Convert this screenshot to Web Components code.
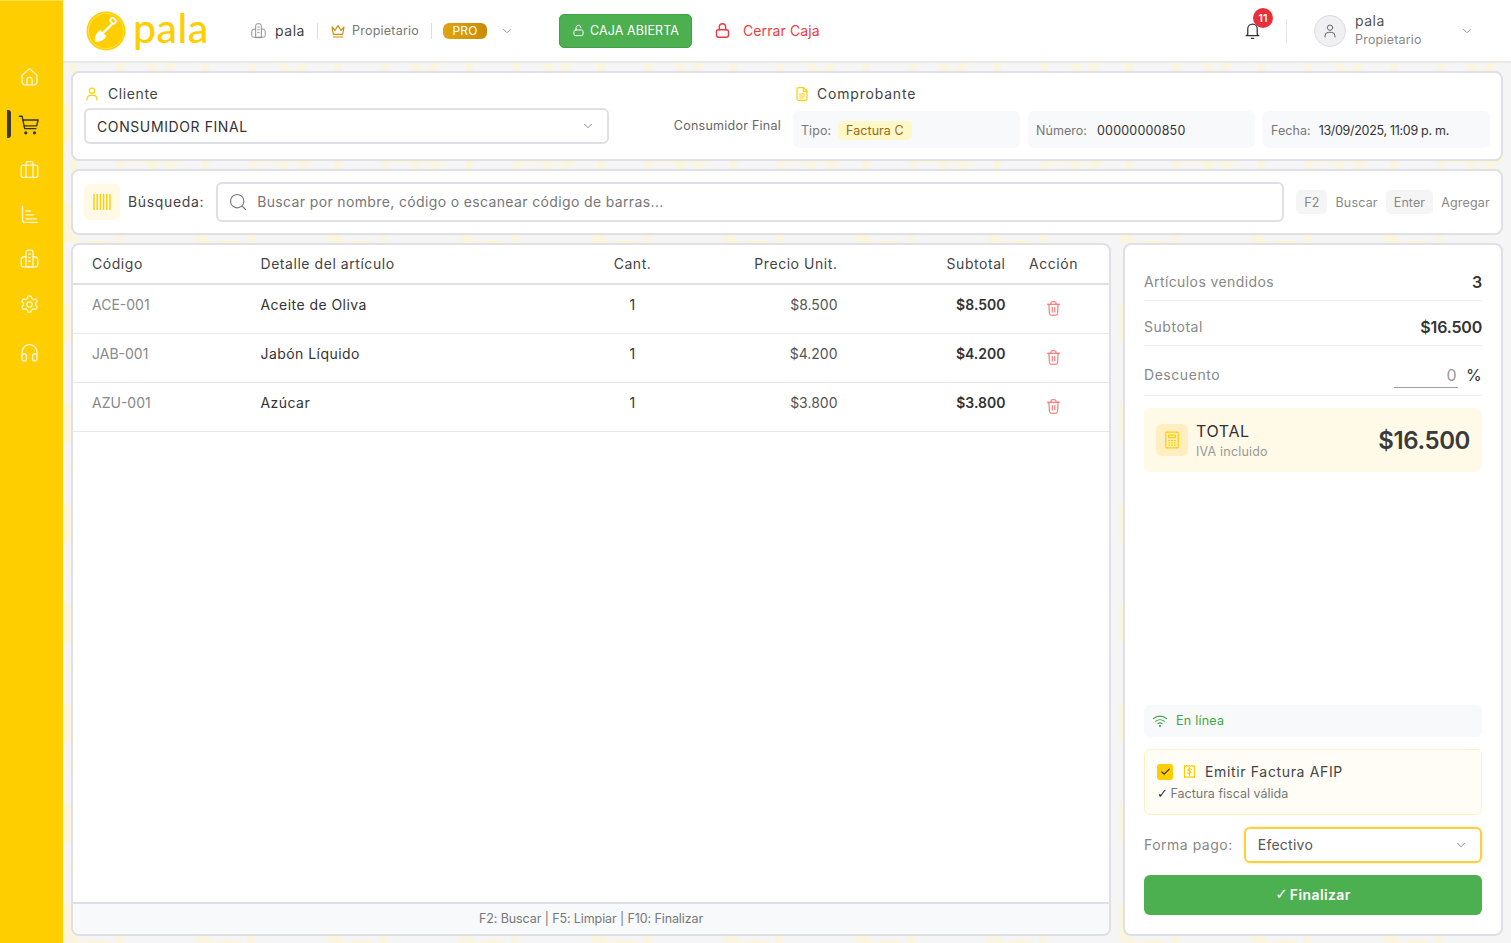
<!DOCTYPE html>
<html lang="es"><head><meta charset="utf-8"><title>Pala</title>
<style>
html,body{margin:0;height:100%;}
body{font-family:"Inter","Liberation Sans",sans-serif;color:#333;overflow:hidden;letter-spacing:.5px}
</style></head><body>
<pos-app></pos-app>
<script>
const I={
home:'<path d="M3.500 10.500 12 3l8.500 7.500V18a3.500 3.500 0 0 1-3.500 3.500H7A3.500 3.500 0 0 1 3.500 18z"/><path d="M9 21.500V16a3 3 0 0 1 6 0v5.500"/>',
cart:'<path d="M1.500 2.500h3l2.800 13.500h12.200"/><path d="M5.300 6.500H22l-1.700 6.500H6.700"/><circle cx="8.500" cy="20.500" r="1" fill="currentColor"/><circle cx="18" cy="20.500" r="1" fill="currentColor"/>',
brief:'<rect x="2.500" y="7" width="19" height="14" rx="2.500"/><path d="M8 7V5a2 2 0 0 1 2-2h4a2 2 0 0 1 2 2v2M8 7v14M16 7v14"/>',
chart:'<path d="M4 2.500V18a3 3 0 0 0 3 3h14M8 8h5M8 12.500h9M8 17h12"/>',
build:'<path d="M8 21.500V5a2.500 2.500 0 0 1 2.500-2.500h3A2.500 2.500 0 0 1 16 5v16.500z"/><path d="M8 10H6a3.500 3.500 0 0 0-3.500 3.500V19A2.500 2.500 0 0 0 5 21.500h14a2.500 2.500 0 0 0 2.500-2.500v-5.500A3.500 3.500 0 0 0 18 10h-2M11 7h2M11 11h2M11 15h2"/>',
gear:'<circle cx="12" cy="12" r="3"/><path d="M10.200 2.500h3.600l.7 2.700 1.900 1.100 2.700-.8 1.800 3.100-2 1.900v2.200l2 1.900-1.800 3.100-2.700-.8-1.900 1.100-.7 2.700h-3.600l-.7-2.700-1.900-1.100-2.700.8-1.800-3.100 2-1.900v-2.200l-2-1.900 1.800-3.100 2.700.8 1.900-1.100z"/>',
head:'<path d="M3.500 16v-4.500a8.500 8.500 0 0 1 17 0V16"/><rect x="3.500" y="13.500" width="5" height="8" rx="2.500"/><rect x="15.500" y="13.500" width="5" height="8" rx="2.500"/>',
user:'<circle cx="12" cy="7" r="4"/><path d="M4.500 21v-1.500A5.500 5.500 0 0 1 10 14h4a5.500 5.500 0 0 1 5.500 5.500V21"/>',
chev:'<path d="M6 9l6 6 6-6"/>',
crown:'<path d="M3 6l4.500 5L12 4l4.500 7L21 6l-2 11H5z"/><path d="M5 21h14"/>',
lock:'<rect x="3.500" y="11" width="17" height="10.500" rx="3"/><path d="M7.500 11V7a4.500 4.500 0 0 1 9 0v4"/>',
unlock:'<rect x="3.500" y="11" width="17" height="10.500" rx="3"/><path d="M7.500 11V7a4.500 4.500 0 0 1 9 0"/>',
bell:'<path d="M6 17V10a6 6 0 0 1 12 0v7l2 1.500H4z"/><path d="M10.500 22h3"/>',
doc:'<path d="M7 2.500h7.500l5 5V19a2.500 2.500 0 0 1-2.500 2.500H7A2.500 2.500 0 0 1 4.500 19V5A2.500 2.500 0 0 1 7 2.500z"/><path d="M14 2.500V8h5.500M8.500 12h7M8.500 15h7M8.500 18h5"/>',
search:'<circle cx="11" cy="11" r="8"/><path d="M17 17l4 4"/>',
trash:'<path d="M3.500 6h17M8.500 6V3.800A1.300 1.300 0 0 1 9.800 2.500h4.400a1.300 1.300 0 0 1 1.300 1.300V6M5.500 6l.7 13a2.500 2.500 0 0 0 2.500 2.500h6.600a2.500 2.500 0 0 0 2.500-2.500l.7-13M10.200 10.500v6.500M13.800 10.500v6.500"/>',
calc:'<rect x="4.500" y="2.500" width="15" height="19" rx="2"/><path d="M8 6h8v3H8zM8 12.500h1.200M11.400 12.500h1.200M14.800 12.500h1.200M8 15.300h1.200M11.400 15.300h1.200M14.800 15.300h1.200M8 18.100h1.200M11.400 18.100h1.200M14.800 18.100h1.200"/>',
wifi:'<path d="M2 8.500a15 15 0 0 1 20 0M5.500 12.500a10 10 0 0 1 13 0M9 16a5 5 0 0 1 6 0"/><circle cx="12" cy="19.500" r=".8" fill="currentColor"/>',
bill:'<path d="M4 2.500l2 1.300 2-1.300 2 1.300 2-1.300 2 1.300 2-1.300 2 1.300 2-1.300v19l-2-1.300-2 1.300-2-1.300-2 1.300-2-1.300-2 1.300-2-1.300-2 1.300z"/><path d="M15 8.500c-.8-1-4.500-1.500-5.500.3-1 2.500 5 2 5 4.700-.3 2-4.500 2-5.800.5M12 6v12"/>',
check:'<path d="M5 12.500l4.500 4.500L19 7.500"/>'
};
const ic=(n,s,c,w=1.6,x='')=>`<svg width="${s}" height="${s}" viewBox="0 0 24 24" fill="none" stroke="currentColor" stroke-width="${w}" stroke-linecap="round" stroke-linejoin="round" style="color:${c};flex:none;display:block;${x}" aria-hidden="true">${I[n]}</svg>`;
const BD='#dfe0e6';
class Base extends HTMLElement{
  connectedCallback(){ if(!this.shadowRoot){this.attachShadow({mode:'open'}).innerHTML=this.render();} }
}
class PosSidebar extends Base{render(){
  const items=[['home',0],['cart',3],['brief',0],['chart',0],['build',-1],['gear',1],['head',3]];
  return `<style>:host{display:flex;flex-direction:column;align-items:center;width:63px;flex:none;background:#ffce00;padding-top:53px;box-sizing:border-box;border-top:1px solid #ffe04d}
  .i{height:45px;width:100%;display:flex;align-items:center;justify-content:center;position:relative;color:#fff6d8;padding-right:5px;box-sizing:border-box;flex:none}
  .i.a{color:#333}.i.a::before{content:"";position:absolute;left:7px;top:8px;width:4px;height:28px;border-radius:0 3px 3px 0;background:#3a3a3a}</style>
  ${items.map(([n,m])=>`<div class="i ${n=='cart'?'a':''}" style="margin-top:${m}px">${ic(n,n=='cart'?22:21,'currentColor',1.5)}</div>`).join('')}`;
}}
class PosHeader extends Base{render(){
  return `<style>:host{display:flex;align-items:center;height:63px;box-sizing:border-box;background:#fff;border-bottom:2px solid #e9e9e9;flex:none;padding-left:23px;font-size:14px;color:#555;letter-spacing:.3px}
  .logo{display:flex;align-items:center;gap:7px;width:164px;flex:none}
  .word{font:500 41px/1 "Lato",sans-serif;color:#ffce00;letter-spacing:.5px;margin-top:-7px}
  .org{display:flex;align-items:center;gap:8px;color:#444;letter-spacing:.55px}
  .sep{width:1px;height:16px;background:#ddd;margin:0 12px 0 12px}
  .role{display:flex;align-items:center;gap:6px;font-size:12.500px;color:#777;letter-spacing:.22px}
  .pro{background:linear-gradient(90deg,#e0a511,#c98a06);color:#fff;border-radius:6px;font-size:12px;height:16px;line-height:16px;width:44px;text-align:center;flex:none;letter-spacing:.2px}
  .caja{margin-left:45px;height:34px;width:133px;box-sizing:border-box;background:#4caf50;border:1px solid #43a047;border-radius:5px;color:#fff;display:flex;align-items:center;justify-content:center;gap:5px;font-size:12.500px;letter-spacing:.1px;flex:none}
  .cerrar{display:flex;align-items:center;gap:12px;margin-left:22px;color:#ee3a43;font-size:14px;letter-spacing:.1px}
  .right{margin-left:auto;display:flex;align-items:center}
  .bell{position:relative;margin-right:24px}
  .badge{position:absolute;left:10px;top:-13px;width:20px;height:20px;border-radius:50%;background:#e8303a;color:#fff;font-size:10.500px;font-weight:600;display:flex;align-items:center;justify-content:center;letter-spacing:0}
  .vs{width:1px;height:24px;background:#e5e5e5;margin-right:27px}
  .av{width:32px;height:32px;box-sizing:border-box;border:1px solid #ddd;border-radius:50%;background:#f0f0f2;display:flex;align-items:center;justify-content:center;margin-right:9px;flex:none}
  .who{width:105px}.n{font-size:14px;color:#555;line-height:18px;letter-spacing:.5px}.r{font-size:12.500px;color:#888;line-height:18px;letter-spacing:.2px;margin-top:1px}
  </style>
  <div class="logo"><svg width="40" height="40" viewBox="0 0 42 42" aria-hidden="true" style="flex:none"><circle cx="21" cy="21" r="20.500" fill="#ffce00"/><circle cx="21" cy="21" r="18.500" fill="none" stroke="#fff" stroke-opacity=".5" stroke-width=".8"/><path d="M9.500 32c-.8-3.500.2-7 2.500-9.500l3-2.500 6.500 6.500-2.500 3c-2.500 2.300-6 3.300-9.500 2.500z" fill="#fff"/><path d="M18 23l9.500-9.500" stroke="#fff" stroke-width="2.600"/><rect x="25.500" y="8" width="6" height="4.500" rx="1" transform="rotate(45 28.500 10.200)" fill="none" stroke="#fff" stroke-width="1.800"/></svg><span class="word">pala</span></div>
  <div class="org">${ic('build',17,'#888',1.3)}<span>pala</span></div><div class="sep"></div>
  <div class="role">${ic('crown',16,'#cf8d0a',1.7)}<span>Propietario</span></div><div class="sep"></div>
  <div class="pro" style="margin-left:-1px">PRO</div>${ic('chev',14,'#888',1.5,'margin-left:13px')}
  <div class="caja">${ic('unlock',13,'#fff',1.8)}<span>CAJA ABIERTA</span></div>
  <div class="cerrar">${ic('lock',17,'#ee3a43',2)}<span>Cerrar Caja</span></div>
  <div class="right"><div class="bell">${ic('bell',19,'#333',1.6)}<div class="badge">11</div></div><div class="vs"></div>
  <div class="av">${ic('user',16,'#666',1.5)}</div><div class="who"><div class="n">pala</div><div class="r">Propietario</div></div>${ic('chev',14,'#888',1.5,'margin-right:37px')}</div>`;
}}
class PosClient extends Base{render(){
  return `<style>:host{display:flex;background:#fff;border:2px solid ${BD};border-radius:8px;box-sizing:border-box;height:90px;flex:none;padding:10px 11px 0 11px;font-size:14px}
  .c{width:525px;flex:none}.t{display:flex;align-items:center;gap:8px;height:21px;color:#444;letter-spacing:.6px}
  .v .t{letter-spacing:.8px;padding-left:1px;gap:7px}
  .sel{margin-top:4px;height:36px;box-sizing:border-box;border:2px solid ${BD};border-radius:6px;display:flex;align-items:center;justify-content:space-between;padding:0 12px 0 11px;color:#333;letter-spacing:.6px}
  .mid{width:184px;flex:none;box-sizing:border-box;text-align:right;padding-right:12px;font-size:12.500px;color:#666;padding-top:35px;letter-spacing:.25px}
  .v{flex:1;min-width:0}.row{display:grid;grid-template-columns:227px 227px 227px;gap:8px;margin-top:7px}
  .b{height:37px;border-radius:6px;background:#f8f9fb;display:flex;align-items:center;padding:1px 8px 0;gap:8px;font-size:12.500px;color:#777;box-sizing:border-box;white-space:nowrap;letter-spacing:.05px}
  .b b{font-weight:400;color:#333}.chip{background:#fdf8c8;color:#9a6a12;border-radius:5px;padding:2px 8px}
  </style>
  <div class="c"><div class="t">${ic('user',16,'#ffce00',1.7)}<span>Cliente</span></div><div class="sel"><span>CONSUMIDOR FINAL</span>${ic('chev',14,'#777',1.5)}</div></div>
  <div class="mid">Consumidor Final</div>
  <div class="v"><div class="t">${ic('doc',16,'#ffce00',1.8)}<span>Comprobante</span></div><div class="row">
  <div class="b"><span>Tipo:</span><span class="chip" style="margin-left:-1px">Factura C</span></div><div class="b"><span>Número:</span><b style="letter-spacing:.2px;margin-left:2px">00000000850</b></div><div class="b"><span>Fecha:</span><b style="letter-spacing:-.3px">13/09/2025, 11:09 p. m.</b></div></div></div>`;
}}
class PosSearch extends Base{render(){
  return `<style>:host{display:flex;align-items:center;height:66px;flex:none;background:#fff;border:2px solid ${BD};border-radius:8px;box-sizing:border-box;padding:0 11px;font-size:14px;color:#444}
  .bc{width:36px;height:36px;border-radius:6px;background:#fff9e6;display:flex;align-items:center;justify-content:center;margin-right:8px;flex:none}
  .lb{letter-spacing:.65px;margin-top:-2px}
  .in{margin:0 12px;flex:1;height:40px;border:2px solid ${BD};border-radius:6px;box-sizing:border-box;display:flex;align-items:center;gap:9px;padding:0 11px;color:#777;letter-spacing:.36px;white-space:nowrap}
  .in span{margin-top:-2px}
  .k{background:#f5f5f5;border-radius:5px;height:24px;display:flex;align-items:center;padding:0 8px;color:#888;font-size:12.500px;letter-spacing:.1px}
  .l{color:#888;font-size:12.500px;margin:0 8px;letter-spacing:.2px}.l:last-child{margin-right:0}
  </style>
  <div class="bc"><svg width="18" height="16" viewBox="0 0 18 16" aria-hidden="true"><path d="M1 0v16M4.200 0v16M7.400 0v16M10.600 0v16M13.800 0v16M17 0v16" stroke="#ffce00" stroke-width="1.400"/></svg></div><span class="lb">Búsqueda:</span>
  <div class="in">${ic('search',20,'#777',1.4,'margin-left:-1px')}<span>Buscar por nombre, código o escanear código de barras...</span></div>
  <span class="k">F2</span><span class="l">Buscar</span><span class="k">Enter</span><span class="l">Agregar</span>`;
}}
class PosTable extends Base{render(){
  const rows=[['ACE-001','Aceite de Oliva','$8.500'],['JAB-001','Jabón Líquido','$4.200'],['AZU-001','Azúcar','$3.800']];
  return `<style>:host{display:flex;flex-direction:column;background:#fff;border:2px solid ${BD};border-radius:8px;box-sizing:border-box;width:1040px;flex:none;font-size:14px;color:#333;overflow:hidden}
  .r{display:grid;grid-template-columns:168.500px 322px 100px 155px 168px 96px;align-items:start;padding-left:19px;box-sizing:border-box;}
  .h{height:40px;border-bottom:2px solid ${BD};align-items:center;color:#444;letter-spacing:.55px;padding-bottom:2px}
  .d{height:49px;border-bottom:1px solid #e7e8ec;padding-top:11px;letter-spacing:.45px}
  .ce{text-align:center}.ri{text-align:right}.co{color:#888;letter-spacing:0}.s{font-weight:600;letter-spacing:0}.pr{color:#555;letter-spacing:0}
  .ac{display:flex;justify-content:center;padding-top:4px}
  .sp{flex:1}.f{height:32px;background:#f8f9fb;border-top:2px solid ${BD};box-sizing:border-box;display:flex;align-items:center;justify-content:center;font-size:12.500px;color:#777;letter-spacing:-.1px;padding-bottom:1px}
  </style>
  <div class="r h"><span>Código</span><span>Detalle del artículo</span><span class="ce">Cant.</span><span class="ri">Precio Unit.</span><span class="ri">Subtotal</span><span class="ce">Acción</span></div>
  ${rows.map(r=>`<div class="r d"><span class="co">${r[0]}</span><span>${r[1]}</span><span class="ce">1</span><span class="ri pr">${r[2]}</span><span class="ri s">${r[2]}</span><div class="ac">${ic('trash',17,'#f66060',1.4)}</div></div>`).join('')}
  <div class="sp"></div><div class="f">F2: Buscar | F5: Limpiar | F10: Finalizar</div>`;
}}
class PosSummary extends Base{render(){
  return `<style>:host{display:flex;flex-direction:column;background:#fff;border:2px solid ${BD};border-radius:8px;box-sizing:border-box;width:380px;flex:none;padding:20px 19px 19px;font-size:14px;color:#333}
  .l{display:flex;justify-content:space-between;align-items:center;border-bottom:1px solid #eee;color:#888;box-sizing:border-box;flex:none;letter-spacing:.55px}
  .l b{font-weight:600;color:#333;font-size:16px;letter-spacing:-.2px}
  .dq{display:flex;align-items:center;gap:8px;color:#333;font-size:16px;letter-spacing:.4px}.u{width:64px;text-align:right;color:#999;border-bottom:1px solid #9aa0aa;height:26px;line-height:26px;box-sizing:border-box;padding-right:1px}
  .tot{margin-top:12px;height:64px;border-radius:6px;background:#fff9e8;display:flex;align-items:center;padding:0 12px;flex:none}
  .ti{width:32px;height:32px;border-radius:6px;background:#ffeebf;display:flex;align-items:center;justify-content:center;margin-right:8px}
  .tx{padding-top:2px}.tt{font-size:16px;line-height:20px;color:#333;letter-spacing:.6px}.ts{font-size:12.500px;color:#999;line-height:19px;letter-spacing:.2px;margin-top:1px}
  .am{margin-left:auto;font-size:24px;font-weight:600;color:#3a3a3a;letter-spacing:-.4px}
  .sp{flex:1}
  .net{height:32px;border-radius:6px;background:#f8f9fb;display:flex;align-items:center;gap:8px;padding:0 8px;color:#3da843;font-size:12.500px;flex:none;letter-spacing:.25px}
  .net span{margin-top:-2px}
  .af{margin-top:12px;height:66px;box-sizing:border-box;border:1px solid #fff0c2;background:#fffdf5;border-radius:6px;padding:10px 12px;flex:none}
  .a1{display:flex;align-items:center;color:#444;height:22px;gap:8px;letter-spacing:.65px}
  .cb{width:16px;height:16px;border-radius:3px;background:#ffce00;display:flex;align-items:center;justify-content:center;margin-top:1px}
  .a2{font-size:12.500px;color:#777;margin-top:3px;line-height:17px;letter-spacing:0}
  .tk{font-family:"DejaVu Sans",sans-serif;color:#333;font-size:13px;letter-spacing:-1px}
  .fp{margin-top:12px;display:flex;align-items:center;gap:11px;color:#888;flex:none;letter-spacing:.5px}
  .fp>span{margin-top:-2px}
  .se{flex:1;height:36px;box-sizing:border-box;border:2px solid #ffce3d;border-radius:6px;display:flex;align-items:center;justify-content:space-between;padding:0 12px;color:#555;box-shadow:0 0 3px #ffe9a0;letter-spacing:.25px}
  .se span{margin-top:-2px}
  .fin{margin-top:12px;height:40px;border-radius:6px;background:#4caf50;color:#fff;display:flex;align-items:center;justify-content:center;font-weight:600;flex:none;gap:2px;letter-spacing:.4px;padding-bottom:2px;box-sizing:border-box}
  .fin .tk{color:#fff;font-size:15px;letter-spacing:0}
  </style>
  <div class="l" style="height:36px;padding-bottom:2px;letter-spacing:.4px"><span>Artículos vendidos</span><b>3</b></div>
  <div class="l" style="height:45px;padding-top:7px"><span>Subtotal</span><b>$16.500</b></div>
  <div class="l" style="height:50px;padding-top:8px"><span>Descuento</span><span class="dq"><span class="u">0</span>%</span></div>
  <div class="tot"><div class="ti">${ic('calc',20,'#ffce00',1.5)}</div><div class="tx"><div class="tt">TOTAL</div><div class="ts">IVA incluido</div></div><div class="am">$16.500</div></div>
  <div class="sp"></div>
  <div class="net">${ic('wifi',16,'#3da843',1.7)}<span>En línea</span></div>
  <div class="af"><div class="a1"><div class="cb">${ic('check',13,'#222',2)}</div>${ic('bill',15,'#ffce00',1.8,'margin-left:1px;margin-top:1px')}<span>Emitir Factura AFIP</span></div><div class="a2"><span class="tk">✓</span> Factura fiscal válida</div></div>
  <div class="fp"><span>Forma pago:</span><div class="se"><span>Efectivo</span>${ic('chev',14,'#777',1.5)}</div></div>
  <div class="fin"><span class="tk">✓</span><span>Finalizar</span></div>`;
}}
class PosApp extends Base{render(){
  return `<style>:host{display:flex;height:943px;width:1511px;overflow:hidden;background:#f5f5f5}
  .main{flex:1;min-width:0;display:flex;flex-direction:column;position:relative;overflow:hidden}
  .bg{position:absolute;left:0;top:63px;width:100%;height:880px;pointer-events:none}
  .ct{position:relative;flex:1;min-height:0;display:flex;flex-direction:column;gap:8px;padding:8px 8px 7px 8px}
  .bot{flex:1;min-height:0;display:flex;gap:12px}
  pos-header{position:relative}
  </style>
  <pos-sidebar></pos-sidebar>
  <div class="main">
   <svg class="bg" viewBox="0 0 1448 880" aria-hidden="true"><defs><pattern id="p" width="132" height="100" patternUnits="userSpaceOnUse"><g fill="none" stroke="#faf5dc" stroke-width="7"><circle cx="34" cy="4" r="24"/><circle cx="34" cy="104" r="24"/><path d="M82 -6l16 22 16-22M6 72l22 22M56 50v40"/></g><rect x="58" y="88" width="62" height="12" rx="3" fill="#faf5dc"/><rect x="-2" y="40" width="12" height="40" rx="6" fill="#faf5dc"/></pattern></defs><rect width="1448" height="880" fill="url(#p)"/></svg>
   <pos-header></pos-header>
   <div class="ct"><pos-client></pos-client><pos-search></pos-search><div class="bot"><pos-table></pos-table><pos-summary></pos-summary></div></div>
  </div>`;
}}
customElements.define('pos-sidebar',PosSidebar);customElements.define('pos-header',PosHeader);customElements.define('pos-client',PosClient);customElements.define('pos-search',PosSearch);customElements.define('pos-table',PosTable);customElements.define('pos-summary',PosSummary);customElements.define('pos-app',PosApp);
</script></body></html>
